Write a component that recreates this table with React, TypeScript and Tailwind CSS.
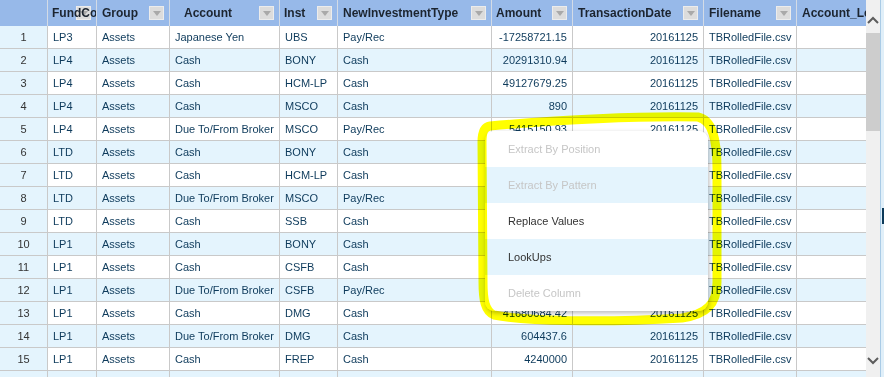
const COLS = [
  { title: "FundCode", w: "w-[49px]", hp: "pl-[4px]", align: "left" },
  { title: "Group", w: "w-[73px]", hp: "pl-[5px]", align: "left" },
  { title: "Account", w: "w-[110px]", hp: "pl-[14px]", align: "left" },
  { title: "Inst", w: "w-[58px]", hp: "pl-[4px]", align: "left" },
  { title: "NewInvestmentType", w: "w-[154px]", hp: "pl-[5px]", align: "left" },
  { title: "Amount", w: "w-[81px]", hp: "pl-[4px]", align: "right" },
  { title: "TransactionDate", w: "w-[131px]", hp: "pl-[5px]", align: "right" },
  { title: "Filename", w: "w-[93px]", hp: "pl-[5px]", align: "left" },
  { title: "Account_Level", w: "w-[120px]", hp: "pl-[5px]", align: "left" },
];

// amount + date for rows hidden under the menu are left out
const ROWS: string[][] = [
  ["LP3", "Assets", "Japanese Yen", "UBS", "Pay/Rec", "-17258721.15", "20161125"],
  ["LP4", "Assets", "Cash", "BONY", "Cash", "20291310.94", "20161125"],
  ["LP4", "Assets", "Cash", "HCM-LP", "Cash", "49127679.25", "20161125"],
  ["LP4", "Assets", "Cash", "MSCO", "Cash", "890", "20161125"],
  ["LP4", "Assets", "Due To/From Broker", "MSCO", "Pay/Rec", "5415150.93", "20161125"],
  ["LTD", "Assets", "Cash", "BONY", "Cash", "", ""],
  ["LTD", "Assets", "Cash", "HCM-LP", "Cash", "", ""],
  ["LTD", "Assets", "Due To/From Broker", "MSCO", "Pay/Rec", "", ""],
  ["LTD", "Assets", "Cash", "SSB", "Cash", "", ""],
  ["LP1", "Assets", "Cash", "BONY", "Cash", "", ""],
  ["LP1", "Assets", "Cash", "CSFB", "Cash", "", ""],
  ["LP1", "Assets", "Due To/From Broker", "CSFB", "Pay/Rec", "", ""],
  ["LP1", "Assets", "Cash", "DMG", "Cash", "41680684.42", "20161125"],
  ["LP1", "Assets", "Due To/From Broker", "DMG", "Cash", "604437.6", "20161125"],
  ["LP1", "Assets", "Cash", "FREP", "Cash", "4240000", "20161125"],
];

const MENU = [
  { label: "Extract By Position", disabled: true },
  { label: "Extract By Pattern", disabled: true },
  { label: "Replace Values", disabled: false },
  { label: "LookUps", disabled: false },
  { label: "Delete Column", disabled: true },
];

function FilterButton() {
  return (
    <div className="absolute right-[5px] top-[6px] w-[15px] h-[14px] bg-[#dcdcdc] border border-[#ececec] flex items-center justify-center">
      <div className="w-0 h-0 border-l-[4px] border-r-[4px] border-t-[5px] border-l-transparent border-r-transparent border-t-[#a9a9a9]" />
    </div>
  );
}

function Chevron({ up }: { up?: boolean }) {
  return (
    <svg width="12" height="8" viewBox="0 0 12 8">
      <polyline
        points={up ? "1,7 6,2 11,7" : "1,1 6,6 11,1"}
        fill="none"
        stroke="#5c5c5c"
        strokeWidth="2"
      />
    </svg>
  );
}

export default function App() {
  return (
    <div className="relative w-[884px] h-[377px] overflow-hidden bg-white flex font-['Liberation_Sans',Arial,sans-serif]">
      {/* grid */}
      <div className="w-[866px] shrink-0 flex flex-col overflow-hidden">
        <div className="flex h-[26px] shrink-0 bg-[#97b9e9]">
          <div className="w-[48px] shrink-0 border-r border-[#d3dbe6]" />
          {COLS.map((c) => (
            <div
              key={c.title}
              className={`relative shrink-0 ${c.w} ${c.hp} h-full border-r border-[#d3dbe6] flex items-center overflow-hidden whitespace-nowrap`}
            >
              <FilterButton />
              <span className="relative text-[12px] font-bold text-[#1c2530]">{c.title}</span>
            </div>
          ))}
        </div>

        {ROWS.map((r, i) => {
          const bg = i % 2 === 0 ? "bg-white" : "bg-[#e4f4fd]";
          const cells = [...r, "TBRolledFile.csv", ""];
          return (
            <div key={i} className={`flex h-[23px] shrink-0 border-b border-[#c9c9c9] ${bg}`}>
              <div className="w-[48px] shrink-0 bg-[#e4f4fd] border-r border-[#c9c9c9] flex items-center justify-center text-[11px] text-[#333]">
                {i + 1}
              </div>
              {COLS.map((c, j) => (
                <div
                  key={j}
                  className={`shrink-0 ${c.w} h-full px-[5px] border-r border-[#c9c9c9] flex items-center overflow-hidden whitespace-nowrap text-[11px] text-[#0d3a5b] ${
                    c.align === "right" ? "justify-end" : "justify-start"
                  }`}
                >
                  {cells[j]}
                </div>
              ))}
            </div>
          );
        })}

        {/* next row, only its top edge in view */}
        <div className="flex h-[23px] shrink-0 bg-[#e4f4fd]">
          <div className="w-[48px] shrink-0 border-r border-[#c9c9c9]" />
          {COLS.map((c, j) => (
            <div key={j} className={`shrink-0 ${c.w} h-full border-r border-[#c9c9c9]`} />
          ))}
        </div>
      </div>

      {/* vertical scrollbar */}
      <div className="w-[14px] shrink-0 bg-[#f0f0f0] flex flex-col items-center">
        <div className="h-[33px] w-full flex justify-center pt-[16px]">
          <Chevron up />
        </div>
        <div className="h-[98px] w-full bg-[#cdcdcd]" />
        <div className="flex-1" />
        <div className="mb-[12px]">
          <Chevron />
        </div>
      </div>

      {/* right edge strip */}
      <div className="w-[4px] shrink-0 border-l border-[#a9cbe6] bg-[#e0eff9] flex flex-col items-end">
        <div className="mt-[208px] h-[16px] w-[2px] bg-[#0b3a5a]" />
      </div>

      {/* context menu */}
      <div className="absolute left-[485px] top-[131px] w-[223px] rounded-[9px] bg-white overflow-hidden shadow-[1px_2px_5px_rgba(0,0,0,0.28)]">
        {MENU.map((m, i) => (
          <div
            key={m.label}
            className={`h-[36px] pl-[23px] flex items-center text-[11px] ${
              i % 2 === 1 ? "bg-[#e4f4fd]" : "bg-white"
            } ${m.disabled ? "text-[#c6c6c6]" : "text-[#333]"}`}
          >
            {m.label}
          </div>
        ))}
      </div>

      {/* highlighter annotation */}
      <svg
        className="absolute left-0 top-0 pointer-events-none mix-blend-multiply"
        width="884"
        height="377"
        viewBox="0 0 884 377"
      >
        <path
          d="M490 126 C560 120 640 116 698 117 C712 120 717 138 717 168 L717 282 C717 304 707 314 682 318 C600 323 525 321 494 315 C485 311 483 300 483 282 L482 142 C482 132 484 127 490 126 Z"
          fill="none"
          stroke="#ffff00"
          strokeWidth="9"
          strokeLinejoin="round"
        />
      </svg>
    </div>
  );
}
